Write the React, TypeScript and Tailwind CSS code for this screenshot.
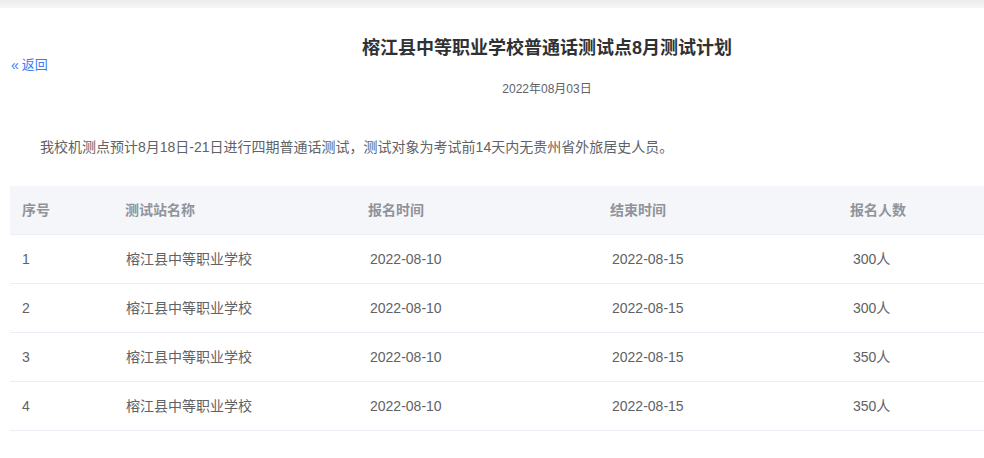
export default function App() {
  const rows = [
    ["1", "300人"],
    ["2", "300人"],
    ["3", "350人"],
    ["4", "350人"],
  ];
  const f = { fontFamily: '"Liberation Sans", "Noto Sans CJK SC", sans-serif' };
  return (
    <div className="w-[984px] h-[458px] overflow-hidden bg-white" style={f}>
      <div className="h-[8px] bg-gradient-to-b from-[#ececec] to-[#f6f6f6]" />
      <div className="relative h-[110px]">
        <div className="absolute left-[11px] top-[47px] text-[13px] text-[#3a7bf7] flex items-center gap-[3px]">
          <span className="text-[14px] leading-none tracking-[-2px]">«</span>
          <span className="ml-[2px]">返回</span>
        </div>
        <div className="pt-[28px] pl-[110px] text-center">
          <div className="text-[18px] font-bold text-[#303133] leading-[24px]">榕江县中等职业学校普通话测试点8月测试计划</div>
          <div className="mt-[21px] text-[12px] text-[#606266] leading-[16px]">2022年08月03日</div>
        </div>
      </div>
      <div className="pl-[40px] pt-[20px] text-[14px] text-[#606266] leading-[18px]">
        我校机测点预计8月18日-21日进行四期普通话测试，测试对象为考试前14天内无贵州省外旅居史人员。
      </div>
      <div className="ml-[10px] mt-[30px] w-[1000px] text-[14px]">
        <div className="flex h-[49px] items-center bg-[#f5f6fa] border-b border-[#ebeef5] font-bold text-[#909399]">
          <div className="w-[103px] pl-[12px]">序号</div>
          <div className="w-[243px] pl-[12px]">测试站名称</div>
          <div className="w-[242px] pl-[12px]">报名时间</div>
          <div className="w-[240px] pl-[12px]">结束时间</div>
          <div className="pl-[12px]">报名人数</div>
        </div>
        {rows.map(([n, c]) => (
          <div key={n} className="flex h-[49px] items-center border-b border-[#ebeef5] text-[#606266]">
            <div className="w-[103px] pl-[12px]">{n}</div>
            <div className="w-[243px] pl-[13px]">榕江县中等职业学校</div>
            <div className="w-[242px] pl-[14px]">2022-08-10</div>
            <div className="w-[240px] pl-[14px]">2022-08-15</div>
            <div className="pl-[15px]">{c}</div>
          </div>
        ))}
      </div>
    </div>
  );
}
